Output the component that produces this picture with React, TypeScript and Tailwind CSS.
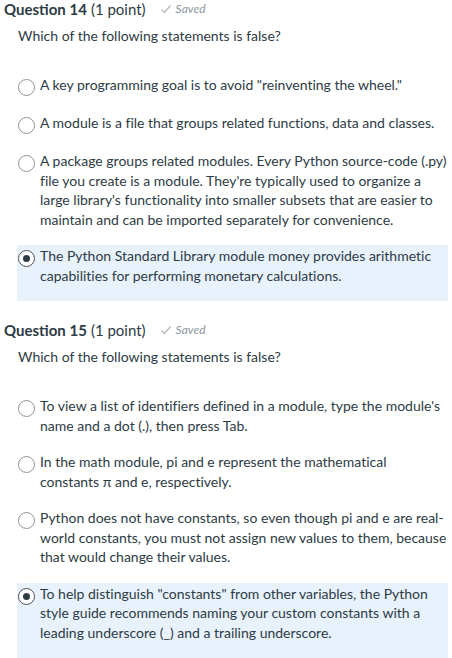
import React from 'react';

type Option = { text: string; selected?: boolean };

const q14: Option[] = [
  { text: 'A key programming goal is to avoid "reinventing the wheel."' },
  { text: 'A module is a file that groups related functions, data and classes.' },
  {
    text: "A package groups related modules. Every Python source-code (.py) file you create is a module. They're typically used to organize a large library's functionality into smaller subsets that are easier to maintain and can be imported separately for convenience.",
  },
  {
    text: 'The Python Standard Library module money provides arithmetic capabilities for performing monetary calculations.',
    selected: true,
  },
];

const q15: Option[] = [
  { text: "To view a list of identifiers defined in a module, type the module's name and a dot (.), then press Tab." },
  { text: 'In the math module, pi and e represent the mathematical constants \u03c0 and e, respectively.' },
  {
    text: 'Python does not have constants, so even though pi and e are real-world constants, you must not assign new values to them, because that would change their values.',
  },
  {
    text: 'To help distinguish "constants" from other variables, the Python style guide recommends naming your custom constants with a leading underscore (_) and a trailing underscore.',
    selected: true,
  },
];

const Radio = ({ selected }: { selected?: boolean }) => (
  <span
    className={`mt-[4px] flex h-[17px] w-[17px] shrink-0 items-center justify-center rounded-full border bg-white ${
      selected ? 'border-[#4a4f54]' : 'border-[#8d959b]'
    }`}
  >
    {selected && <span className="h-[7px] w-[7px] rounded-full bg-[#2d3b45]" />}
  </span>
);

const Question = ({ num, options }: { num: number; options: Option[] }) => (
  <div className="flex flex-col">
    <div className="flex items-center pl-[4px] text-[15px] leading-[18px]">
      <span className="font-bold">Question {num}</span>
      <span className="ml-[4px]">(1 point)</span>
      <span className="ml-[14px] flex items-center gap-[4px] text-[12px] italic text-[#8b969e]">
        <svg width="12" height="12" viewBox="0 0 12 12" fill="none" stroke="#b3bac0" strokeWidth="1.3">
          <path d="M1.5 6.5 L4.5 9.5 L10.5 2.5" />
        </svg>
        Saved
      </span>
    </div>
    <p className="mt-[8px] pl-[18px] text-[14px] leading-[20px]">Which of the following statements is false?</p>
    <div className="mt-[28px] flex flex-col">
      {options.map((o, i) => (
        <div
          key={i}
          className={`ml-[17px] mr-[4px] flex gap-[5px] pl-[1px] pt-[1px] pb-[16px] ${o.selected ? 'bg-[#e8f2fc]' : ''}`}
        >
          <Radio selected={o.selected} />
          <span className="text-[14px] leading-[19.5px] [font-variant-ligatures:none]">{o.text}</span>
        </div>
      ))}
    </div>
  </div>
);

export default function App() {
  return (
    <div
      className="h-[658px] w-[452px] overflow-hidden bg-white text-[#2d3b45]"
      style={{ fontFamily: 'Lato, "Noto Sans", sans-serif' }}
    >
      <div className="flex flex-col gap-[20px]">
        <Question num={14} options={q14} />
        <Question num={15} options={q15} />
      </div>
    </div>
  );
}
